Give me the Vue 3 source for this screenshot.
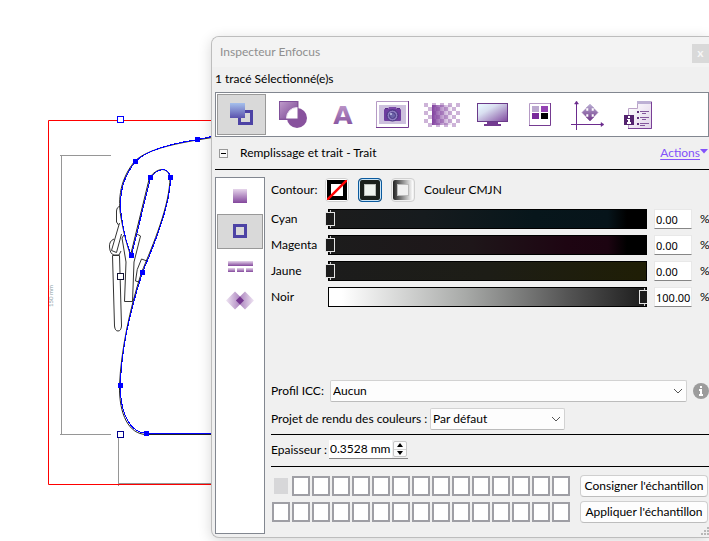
<script setup>
import { ref } from 'vue'

const tools = [
  'Remplissage et trait', 'Forme', 'Texte', 'Image', 'Transparence',
  'Écran', 'Séparations', 'Position', 'Informations'
]
const activeTool = ref(0)

const tabs = ['Remplissage', 'Trait', 'Pointillés', 'Surimpression']
const activeTab = ref(1)

const paints = ['none', 'solid', 'gradient']
const activePaint = ref('solid')

const inks = ref([
  { id: 'cyan', label: 'Cyan', value: 0 },
  { id: 'magenta', label: 'Magenta', value: 0 },
  { id: 'yellow', label: 'Jaune', value: 0 },
  { id: 'black', label: 'Noir', value: 100 }
])
const profile = ref('Aucun')
const intent = ref('Par défaut')
const thickness = ref('0.3528 mm')

const nodes = [
  [197, 139], [135, 161], [150, 177], [170, 177], [131, 255],
  [142, 272], [120, 385], [146, 433]
]
const handles = [
  [120, 119, '#00f'], [120, 276, '#113'], [120, 434, '#00008c']
]
const checks = []
for (let r = 0; r < 6; r++) {
  for (let c = 0; c < 9; c++) {
    if ((r + c) % 2 === 0) checks.push([424 + c * 4, 103 + r * 4])
  }
}
</script>

<template>
  <main class="desk">
    <svg class="drawing" width="709" height="541" viewBox="0 0 709 541" aria-hidden="true">
      <g fill="none" stroke="#969696">
        <path d="M60 155.500H111M61.500 155V434M60 434.500H111M118.500 437V486M118 483.500H709" />
      </g>
      <text class="dimension" transform="translate(53 307) rotate(-90)">150 mm</text>
      <path d="M709 120.500H48.500V484.500H709" fill="none" stroke="#f00" />
      <g fill="none" stroke="#333" stroke-width="1">
        <path d="M120 206.500Q117 206.500 116.500 211V222L118.500 225" />
        <path d="M119.500 223L111.500 250.500L116.500 252.500L121.500 234" />
        <path d="M114 239Q109 241 109.500 247Q110 254 114 255H119L121 251" />
        <path d="M112.500 255.500L114.500 326Q115 331 118 331Q121 331 121.500 326L119.500 255.500Z" />
        <path d="M124 235L122 238L126 262L124.500 301.500H132.500L134 262L140.500 236L137 234" />
        <path d="M147 261L141.500 259Q136 269 135.500 281L139 282" />
      </g>
      <path
        d="M212 137.500L197 140C175 144 147 149 134.500 161.500C118 182 118 204 121.500 220C125 240 129 250 130.500 255.500L149.500 177.500C157 168 167 166 170 177C170 205 153 245 141.500 272.500C130 308 121 350 119.500 385.500C119 415 129 434 146 434.500H212"
        fill="none" stroke="#222" />
      <path
        d="M212 136.500L197.500 139.500C175 143 148 149 135.500 161.500C119 182 119 204 122 220C125 240 129 250 131.500 255.500L150.500 177.500C158 168 168 166 170.500 177.500C170.500 205 154 245 142.500 272.500C131 308 121 350 120.500 385.500C120 415 131 433 146.500 433.500H212"
        fill="none" stroke="#00f" shape-rendering="crispEdges" />
      <rect v-for="n in nodes" :key="n.join()" :x="n[0] - 2" :y="n[1] - 2" width="5" height="5" fill="#00f" />
      <rect v-for="h in handles" :key="h.join()" :x="h[0] - 2.5" :y="h[1] - 2.5" width="6" height="6"
        fill="#fff" :stroke="h[2]" />
    </svg>

    <section class="window" aria-label="Inspecteur Enfocus">
      <header class="titlebar">
        <span>Inspecteur Enfocus</span>
        <button class="close" type="button" aria-label="Fermer">x</button>
      </header>
      <p class="status">1 tracé Sélectionné(e)s</p>

      <svg class="defs" width="0" height="0" aria-hidden="true">
        <defs>
          <linearGradient id="blueFill" x2="0" y2="1"><stop stop-color="#a5c0ec" /><stop offset="1" stop-color="#5a52ae" /></linearGradient>
          <linearGradient id="violetDiag" x2="1" y2="1"><stop stop-color="#c09bcb" /><stop offset="1" stop-color="#74408f" /></linearGradient>
          <linearGradient id="violetDown" x2="0" y2="1"><stop stop-color="#c5a2d0" /><stop offset="1" stop-color="#7c4597" /></linearGradient>
          <linearGradient id="paleDown" x2="0" y2="1"><stop stop-color="#e6d5eb" /><stop offset="1" stop-color="#83479c" /></linearGradient>
          <linearGradient id="fadeRight"><stop stop-color="#8242a0" /><stop offset="1" stop-color="#8242a0" stop-opacity="0" /></linearGradient>
          <linearGradient id="screenFill" x2="1" y2="1"><stop offset=".1" stop-color="#e6f5fd" /><stop offset=".35" stop-color="#d9dff0" /><stop offset="1" stop-color="#7f479e" /></linearGradient>
          <linearGradient id="moveFill" x2="0" y2="1"><stop stop-color="#b9aed3" /><stop offset="1" stop-color="#703688" /></linearGradient>
          <linearGradient id="pageFill" x2="1" y2="1"><stop stop-color="#fff" /><stop offset="1" stop-color="#e1d3e9" /></linearGradient>
          <linearGradient id="fadeLeft"><stop stop-color="#efe5f3" /><stop offset="1" stop-color="#9a6bb0" /></linearGradient>
          <linearGradient id="fadeOut"><stop stop-color="#9a6bb0" /><stop offset="1" stop-color="#efe5f3" /></linearGradient>
          <clipPath id="squareClip"><rect x="280" y="102" width="18" height="17" /></clipPath>
        </defs>
      </svg>

      <nav class="toolbar" aria-label="Catégories">
        <button v-for="(t, i) in tools" :key="t" type="button" class="tool" :class="{ active: activeTool === i }"
          :aria-label="t" @click="activeTool = i">
          <svg width="49" height="41" :viewBox="`${217 + i * 50} 94 49 41`">
            <g v-if="i === 0">
              <rect x="239.500" y="111.500" width="12" height="12" fill="none" stroke="#4d43a5" stroke-width="3" />
              <rect x="230" y="103" width="15" height="15" fill="url(#blueFill)" />
            </g>
            <g v-else-if="i === 1">
              <circle cx="297" cy="118" r="10" fill="#88529d" />
              <rect x="279.500" y="101.500" width="18" height="18" fill="url(#violetDiag)" stroke="#80509a" />
              <circle cx="297" cy="118" r="10.500" fill="#fff" stroke="#eadff0" clip-path="url(#squareClip)" />
              <path d="M298 101V119H280" fill="none" stroke="#8a5a9e" />
            </g>
            <text v-else-if="i === 2" class="letter" x="343" y="124" text-anchor="middle" fill="url(#violetDown)">A</text>
            <g v-else-if="i === 3">
              <path d="M376.500 128V101.500H408" fill="none" stroke="#b59ac5" />
              <path d="M408.500 101V127.500H376" fill="none" stroke="#753b91" />
              <rect x="379" y="105" width="27" height="19" fill="#cdc0de" />
              <rect x="384" y="109" width="17" height="12" rx="1" fill="#6d3c9e" />
              <path d="M388 109L389 107H396L397 109Z" fill="#7a49a7" />
              <path d="M385 108.500H388M397 108.500H400" stroke="#552a87" />
              <circle cx="392.500" cy="115.500" r="5.500" fill="#8e7cc0" stroke="#43307c" />
              <circle cx="392.500" cy="115.500" r="3" fill="#6c63a8" stroke="#493b85" />
              <circle cx="391" cy="114" r="1" fill="#c9c8eb" />
            </g>
            <g v-else-if="i === 4">
              <rect v-for="c in checks" :key="c.join()" :x="c[0]" :y="c[1]" width="4" height="4" fill="#cdb3d8" />
              <rect x="432" y="105" width="21" height="20" fill="url(#fadeRight)" />
            </g>
            <g v-else-if="i === 5">
              <rect x="477.500" y="103.500" width="30" height="18" fill="url(#screenFill)" stroke="#6a3a8a" />
              <path d="M487 122H498V124H501V126H484V124H487Z" fill="#733b90" />
            </g>
            <g v-else-if="i === 6">
              <path d="M529.500 126V103.500H550" fill="none" stroke="#b59ac5" />
              <path d="M550.500 103V125.500H529" fill="none" stroke="#753b91" />
              <rect x="532" y="106" width="7" height="6" fill="#bba8cf" />
              <rect x="541" y="106" width="7" height="6" fill="#9342b3" />
              <rect x="532" y="113" width="7" height="6" fill="#78299b" />
              <rect x="541" y="113" width="7" height="6" />
            </g>
            <g v-else-if="i === 7">
              <path d="M576.500 102V130M571 124.500H603" stroke="#6b2b8d" />
              <path d="M576.500 101L578.500 104H574.500ZM604 124.500L601 122.500V126.500Z" fill="#6b2b8d" stroke="#6b2b8d" stroke-width=".5" />
              <path d="M590 104L594 108H591.500V111H594V108.500L598 112.500L594 116.500V114H591.500V117H594L590 121L586 117H588.500V114H586V116.500L582 112.500L586 108.500V111H588.500V108H586Z" fill="url(#moveFill)" stroke="url(#moveFill)" stroke-width=".5" />
            </g>
            <g v-else>
              <path d="M628.500 108.500H637.500V101.500H651.500V128.500H628.500Z" fill="url(#pageFill)" stroke="#baa2c7" />
              <path d="M651.500 102V128.500H628" fill="none" stroke="#793f96" />
              <rect x="637" y="101" width="14" height="3" fill="#bdb0d4" />
              <rect x="624" y="115" width="10" height="10" fill="#54236f" />
              <path d="M628 116H630V118H628ZM627 119H630V122H631V124H627V122H628V120H627Z" fill="#fff" />
              <path d="M640 111.500H649M642 113.500H646M640 117.500H649M642 119.500H646M640 123.500H649M640 125.500H645" stroke="#84579c" />
              <path d="M637 112H639M637 118H639M637 124H639" stroke="#5e2b78" stroke-width="2" />
            </g>
          </svg>
        </button>
      </nav>

      <div class="heading">
        <button class="collapse" type="button" aria-label="Réduire"></button>
        <h1>Remplissage et trait - Trait</h1>
        <a class="actions" href="#">Actions</a>
        <svg class="caret" width="8" height="5" viewBox="0 0 8 5"><path d="M0 0H8L4 4.500Z" fill="#8352fa" /></svg>
      </div>

      <div class="body">
        <nav class="sidebar" aria-label="Propriétés">
          <button v-for="(t, i) in tabs" :key="t" type="button" class="tab" :class="{ active: activeTab === i }"
            :aria-label="t" @click="activeTab = i">
            <svg width="44" height="33" :viewBox="`218 ${180 + i * 35} 44 33`">
              <rect v-if="i === 0" x="233" y="189" width="14" height="14" fill="url(#paleDown)" />
              <rect v-else-if="i === 1" x="234.500" y="225.500" width="11" height="11" fill="none" stroke="#4d43a5" stroke-width="3" />
              <g v-else-if="i === 2" fill="url(#paleDown)">
                <rect x="228" y="261" width="25" height="5" />
                <path d="M228 268H235V272H228ZM237 268H244V272H237ZM246 268H253V272H246Z" />
              </g>
              <g v-else>
                <path d="M226 300.500L235 291.500L244 300.500L235 309.500Z" fill="url(#fadeLeft)" />
                <path d="M236 300.500L245 291.500L254 300.500L245 309.500Z" fill="url(#fadeOut)" />
                <path d="M236 300.500L240 296.500L244 300.500L240 304.500Z" fill="#74368f" />
              </g>
            </svg>
          </button>
        </nav>

        <div class="content">
          <div class="contour">
            <span class="contour-label">Contour:</span>
            <button v-for="p in paints" :key="p" type="button" class="paint" :class="[p, { active: activePaint === p }]"
              :aria-label="p" @click="activePaint = p">
              <svg v-if="p === 'none'" width="20" height="20" viewBox="0 0 20 20">
                <rect width="20" height="20" /><rect x="4" y="4" width="12" height="12" fill="#fff" />
                <path d="M0 20L20 0" stroke="#f00" stroke-width="2.500" />
              </svg>
              <span v-else class="hole"></span>
            </button>
            <span>Couleur CMJN</span>
          </div>

          <div class="inks">
            <template v-for="ink in inks" :key="ink.id">
              <label :for="ink.id">{{ ink.label }}</label>
              <div class="track" :class="ink.id">
                <input :id="ink.id" v-model.number="ink.value" type="range" min="0" max="100" step="0.01" />
              </div>
              <input class="amount" type="text" :value="ink.value.toFixed(2)" :aria-label="ink.label + ' %'"
                @change="ink.value = Number($event.target.value) || 0" />
              <span>%</span>
            </template>
          </div>

          <div class="row profile">
            <label for="profile">Profil ICC:</label>
            <div class="select grow">
              <select id="profile" v-model="profile"><option>Aucun</option></select>
              <svg width="10" height="6" viewBox="0 0 10 6"><path d="M1 1L5 5L9 1" /></svg>
            </div>
            <svg class="info" width="16" height="16" viewBox="0 0 16 16">
              <circle cx="8" cy="8" r="8" fill="#9c9c9c" />
              <path d="M7 3H9V5H7ZM6 6H9V11H10V13H6V11H7V8H6Z" fill="#fff" />
            </svg>
          </div>
          <div class="row intent">
            <label for="intent">Projet de rendu des couleurs :</label>
            <div class="select medium">
              <select id="intent" v-model="intent"><option>Par défaut</option></select>
              <svg width="10" height="6" viewBox="0 0 10 6"><path d="M1 1L5 5L9 1" /></svg>
            </div>
          </div>
          <div class="row thickness">
            <label for="thickness">Epaisseur :</label>
            <div class="spin">
              <input id="thickness" v-model="thickness" type="text" />
              <span class="steps">
                <button type="button" aria-label="Augmenter"><svg width="6" height="4" viewBox="0 0 6 4"><path d="M3 0L6 4H0Z" /></svg></button>
                <button type="button" aria-label="Diminuer"><svg width="6" height="4" viewBox="0 0 6 4"><path d="M0 0H6L3 4Z" /></svg></button>
              </span>
            </div>
          </div>

          <div class="samples">
            <div v-for="r in 2" :key="r" class="sample-row">
              <button v-for="c in 15" :key="c" type="button" class="sample" :class="{ filled: r === 1 && c === 1 }"
                :aria-label="`Échantillon ${r}-${c}`"></button>
              <button type="button" class="command">{{ r === 1 ? "Consigner l'échantillon" : "Appliquer l'échantillon" }}</button>
            </div>
            <svg class="grip" width="8" height="8" viewBox="0 0 8 8"><path d="M6 0H8V2H6ZM3 3H5V5H3ZM6 3H8V5H6ZM0 6H2V8H0ZM3 6H5V8H3ZM6 6H8V8H6Z" fill="#b8b8b8" /></svg>
          </div>
        </div>
      </div>
    </section>
  </main>
</template>

<style>
body {
  margin: 0;
  background: #fff;
}
</style>

<style scoped>
.desk {
  position: relative;
  display: flow-root;
  min-height: 100vh;
  box-sizing: border-box;
  overflow: hidden;
  padding: 36px 0 3px 211px;
  font: 12px/16px Lato, "Noto Sans", sans-serif;
  color: #000;
}
.desk *, .desk *::before { box-sizing: border-box; }
button, input, select { font: inherit; color: inherit; margin: 0; padding: 0; border-radius: 0; }
button { border: 0; background: none; }
svg { display: block; flex: none; }

.drawing { position: absolute; left: 0; top: 0; }
.dimension { font-size: 6px; fill: #8a9aa4; }

.window {
  position: relative;
  padding: 0 0 3px 3px;
  border: 1px solid #bdbdbd;
  border-right: 0;
  border-radius: 8px 0 0 8px;
  background: #f0f0f0;
  box-shadow: 0 3px 14px rgba(0, 0, 0, .16);
}
.titlebar {
  display: flex;
  align-items: center;
  justify-content: space-between;
  height: 30px;
  margin-left: -3px;
  padding-left: 8px;
  border-radius: 7px 0 0 0;
  background: #f3f3f3;
  color: #8f8f8f;
}
.close { width: 17px; height: 19px; margin-top: 2px; background: #d9d9d9; color: #f6f6f6; line-height: 16px; font-weight: 700; }
.status { height: 25px; margin: 0; padding-top: 4px; }
.defs { position: absolute; }

.toolbar {
  display: flex;
  gap: 1px;
  padding: 1px;
  border: 1px solid #828790;
  background: #fff;
}
.tool { width: 49px; height: 41px; }
.tool svg { overflow: visible; }
.tool.active, .tab.active { background: #d9d9d9; box-shadow: inset 0 0 0 1px #999; }
.letter { font: bold 25px "DejaVu Sans", sans-serif; }

.heading { display: flex; align-items: center; height: 33px; padding: 0 1px 0 4px; border-bottom: 1px solid #000; }
.heading h1 { flex: 1; margin: 0 0 0 12px; font-size: 12px; font-weight: 400; }
.collapse { position: relative; width: 9px; height: 9px; border: 1px solid #999; background: #f8f8f8; }
.collapse::before { content: ""; position: absolute; left: 1px; right: 1px; top: 3px; height: 1px; background: #000; }
.actions { color: #8352fa; text-decoration: underline; text-underline-offset: 2px; }
.caret { margin-bottom: 4px; }

.body { display: grid; grid-template-columns: 50px 1fr; gap: 6px; padding-top: 7px; }
.sidebar { padding: 1px; border: 1px solid #828790; background: #fff; }
.tab { display: flex; align-items: center; justify-content: center; width: 46px; height: 35px; }
.content { min-width: 0; padding-bottom: 11px; }

.contour { display: flex; align-items: center; height: 26px; }
.contour-label { width: 54px; }
.paint {
  display: grid;
  place-items: center;
  width: 24px;
  height: 24px;
  margin-right: 9px;
  border: 1px solid #d0d0d0;
  border-radius: 4px;
  background: #fff;
}
.paint.solid { background: #1c1d1d; }
.paint.gradient { background: linear-gradient(90deg, #222, #fff) content-box #f6f6f6; padding: 1px; }
.paint.active { border: 1px solid #0a5a9e; box-shadow: inset 0 0 0 1px #c8e2f4; }
.hole { width: 12px; height: 12px; border: 1px solid #bbb; background: #f0f0f0; }

.inks {
  display: grid;
  grid-template-columns: 57px 1fr 53px 9px;
  grid-auto-rows: 20px;
  gap: 6px 0;
  margin: 6px 0 73px;
  align-items: center;
}
.inks > label, .inks > span { white-space: nowrap; }
.track { display: flex; height: 20px; border: 1px solid #000; clip-path: inset(0 0 0 -5px); }
.track.cyan { background: linear-gradient(90deg, #1c1c1c, #161b1e 30%, #07161b 65%, #06141a 88%, #000 94%); }
.track.magenta { background: linear-gradient(90deg, #1c1c1c, #1e1619 45%, #1e0512 75%, #1c0411 88%, #000 94%); }
.track.yellow { background: linear-gradient(90deg, #1c1c1c, #1d1d16 50%, #1f1e05); }
.track.black { background: linear-gradient(90deg, #fff 4%, #a8aaa8 43%, #555 75%, #1c1c1c); }
.track input { appearance: none; flex: 1; min-width: 0; height: 18px; margin: 0 -3px 0 -4px; background: none; outline: none; }
.track input::-webkit-slider-thumb {
  appearance: none;
  width: 10px;
  height: 18px;
  background:
    linear-gradient(#1c1c1c, #1c1c1c) center / 8px 12px no-repeat,
    linear-gradient(#e4e4e4, #e4e4e4) center / 10px 14px no-repeat,
    linear-gradient(#ccc, #ccc) center / 1px 18px no-repeat;
}
.amount {
  width: 38px;
  height: 20px;
  margin-left: 7px;
  padding-left: 1px;
  border: 1px solid #e8e8e8;
  border-bottom-color: #868686;
  background: #fff;
  font: 11px/16px "Noto Sans", sans-serif;
}

.row { display: flex; align-items: center; white-space: nowrap; }
.row label { flex: none; }
.profile label { width: 59px; }
.intent label { width: 159px; }
.thickness label { width: 58px; }
.intent { margin-top: 6px; padding-bottom: 4px; border-bottom: 1px solid #000; }
.thickness { padding: 5px 0 7px; border-bottom: 1px solid #000; }
.select { display: grid; align-items: center; height: 22px; }
.select.grow { flex: 1; margin-right: 6px; }
.select.medium { width: 135px; }
.select select {
  grid-area: 1 / 1;
  appearance: none;
  width: 100%;
  height: 22px;
  padding-left: 2px;
  border: 1px solid #d2d2d2;
  border-bottom-color: #bcbcbc;
  border-radius: 2px;
  background: #fdfdfd;
}
.select svg { grid-area: 1 / 1; justify-self: end; margin-right: 4px; pointer-events: none; fill: none; stroke: #555; }
.spin { display: flex; width: 79px; height: 19px; border-bottom: 1px solid #868686; background: #f0f0f0; }
.spin input { flex: 1; min-width: 0; padding-left: 1px; border: 0; background: #fff; }
.steps { display: grid; width: 14px; margin: 1px; border: 1px solid #c8c8c8; border-radius: 2px; background: #fbfbfb; }
.steps button { display: grid; place-items: center; }
.steps button + button { border-top: 1px solid #d5d5d5; }

.samples { position: relative; display: grid; gap: 4px; padding-top: 8px; }
.sample-row { display: flex; align-items: center; gap: 2px; height: 22px; padding: 0 1px; }
.sample { flex: none; width: 18px; height: 20px; border: 2px solid #9f9fa5; background: #fff; }
.sample.filled { border-color: #f0f0f0; background: #d7d7d9; }
.command {
  flex: 1;
  min-width: 0;
  height: 22px;
  margin-left: 8px;
  border: 1px solid #cfcfcf;
  border-bottom-color: #bdbdbd;
  border-radius: 4px;
  background: #fdfdfd;
  white-space: nowrap;
}
.grip { position: absolute; right: 0; bottom: -12px; }
</style>
